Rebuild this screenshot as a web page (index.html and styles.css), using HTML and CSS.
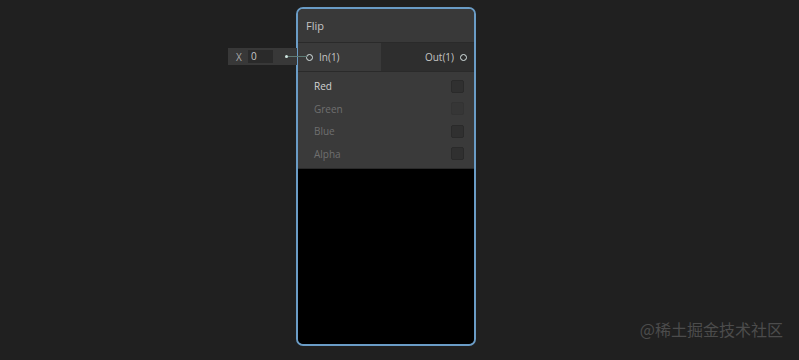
FILE: index.html
```html
<!DOCTYPE html>
<html lang="en">
<head>
<meta charset="UTF-8" />
<title>Flip Node</title>
<link rel="stylesheet" href="styles.css">
</head>
<body>
  <div class="canvas">
    <div class="input-field">
      <span class="axis">X</span>
      <span class="value">0</span>
      <span class="dot"></span>
      <span class="wire"></span>
    </div>

    <div class="node">
      <div class="title">Flip</div>
      <div class="ports">
        <div class="port-in"><span class="ring"></span>In(1)</div>
        <div class="port-out">Out(1)<span class="ring"></span></div>
      </div>
      <div class="controls">
        <div class="row"><span class="label on">Red</span><span class="check"></span></div>
        <div class="row"><span class="label">Green</span><span class="check off"></span></div>
        <div class="row"><span class="label">Blue</span><span class="check"></span></div>
        <div class="row"><span class="label">Alpha</span><span class="check"></span></div>
      </div>
      <div class="preview"></div>
    </div>

    <div class="watermark">@稀土掘金技术社区</div>
  </div>
</body>
</html>
```

FILE: styles.css
```css
body {
  margin: 0;
  background: #202020;
  font-family: "Open Sans", "DejaVu Sans", sans-serif;
}

.canvas {
  position: relative;
  width: 799px;
  height: 360px;
  overflow: hidden;
}

/* node on the graph canvas */
.node {
  position: absolute;
  left: 296px;
  top: 7px;
  width: 176px;
  height: 335px;
  border: 2px solid #6a9cc6;
  border-radius: 7px;
  background: #393939;
  display: flex;
  flex-direction: column;
  overflow: hidden;
}

.title {
  height: 33px;
  padding-left: 8px;
  display: flex;
  align-items: center;
  font-size: 11px;
  color: #c4c4c4;
  background: #393939;
  border-bottom: 1px solid #2a2a2a;
}

.ports {
  display: flex;
  height: 28px;
  border-bottom: 1px solid #2a2a2a;
}

.port-in, .port-out {
  display: flex;
  align-items: center;
  font-size: 10px;
  color: #c4c4c4;
}

.port-in {
  width: 83px;
  background: #3a3a3a;
  padding-left: 8px;
  gap: 6px;
  box-sizing: border-box;
}

.port-out {
  flex: 1;
  background: #2e2e2e;
  justify-content: flex-end;
  padding-right: 7px;
  gap: 6px;
}

.ring {
  width: 5px;
  height: 5px;
  border: 1.5px solid #d8e4e4;
  border-radius: 50%;
}

.controls {
  height: 97px;
  background: #3a3a3a;
  padding: 3px 10px 0 16px;
  box-sizing: border-box;
  border-bottom: 1px solid #2a2a2a;
}

.row {
  height: 22.5px;
  display: flex;
  align-items: center;
  justify-content: space-between;
}

.label {
  font-size: 10px;
  color: #6f6f6f;
}

.label.on {
  color: #d2d2d2;
}

.check {
  width: 11px;
  height: 11px;
  background: #303030;
  border: 1px solid #2a2a2a;
  border-radius: 2px;
}

.check.off {
  background: #363636;
  border-color: #333;
}

.preview {
  flex: 1;
  background: #000;
}

/* inline default value field for the input port */
.input-field {
  position: absolute;
  z-index: 1;
  left: 228px;
  top: 48px;
  width: 69px;
  height: 17px;
  background: #383838;
  display: flex;
  align-items: center;
  font-size: 10px;
  color: #a8a8a8;
}

.input-field span {
  flex-shrink: 0;
}

.axis {
  margin-left: 8px;
  width: 12px;
}

.value {
  width: 22px;
  height: 13px;
  line-height: 13px;
  padding-left: 3px;
  background: #2a2a2a;
  color: #c8c8c8;
}

.dot {
  width: 3px;
  height: 3px;
  margin-left: 12px;
  border-radius: 50%;
  background: #cfe6e0;
}

.wire {
  width: 19px;
  height: 1px;
  background: #5f7c77;
}

.watermark {
  position: absolute;
  right: 16px;
  bottom: 19px;
  font-size: 16px;
  color: #4c4c4c;
  font-family: "Noto Sans CJK SC", sans-serif;
}
```
